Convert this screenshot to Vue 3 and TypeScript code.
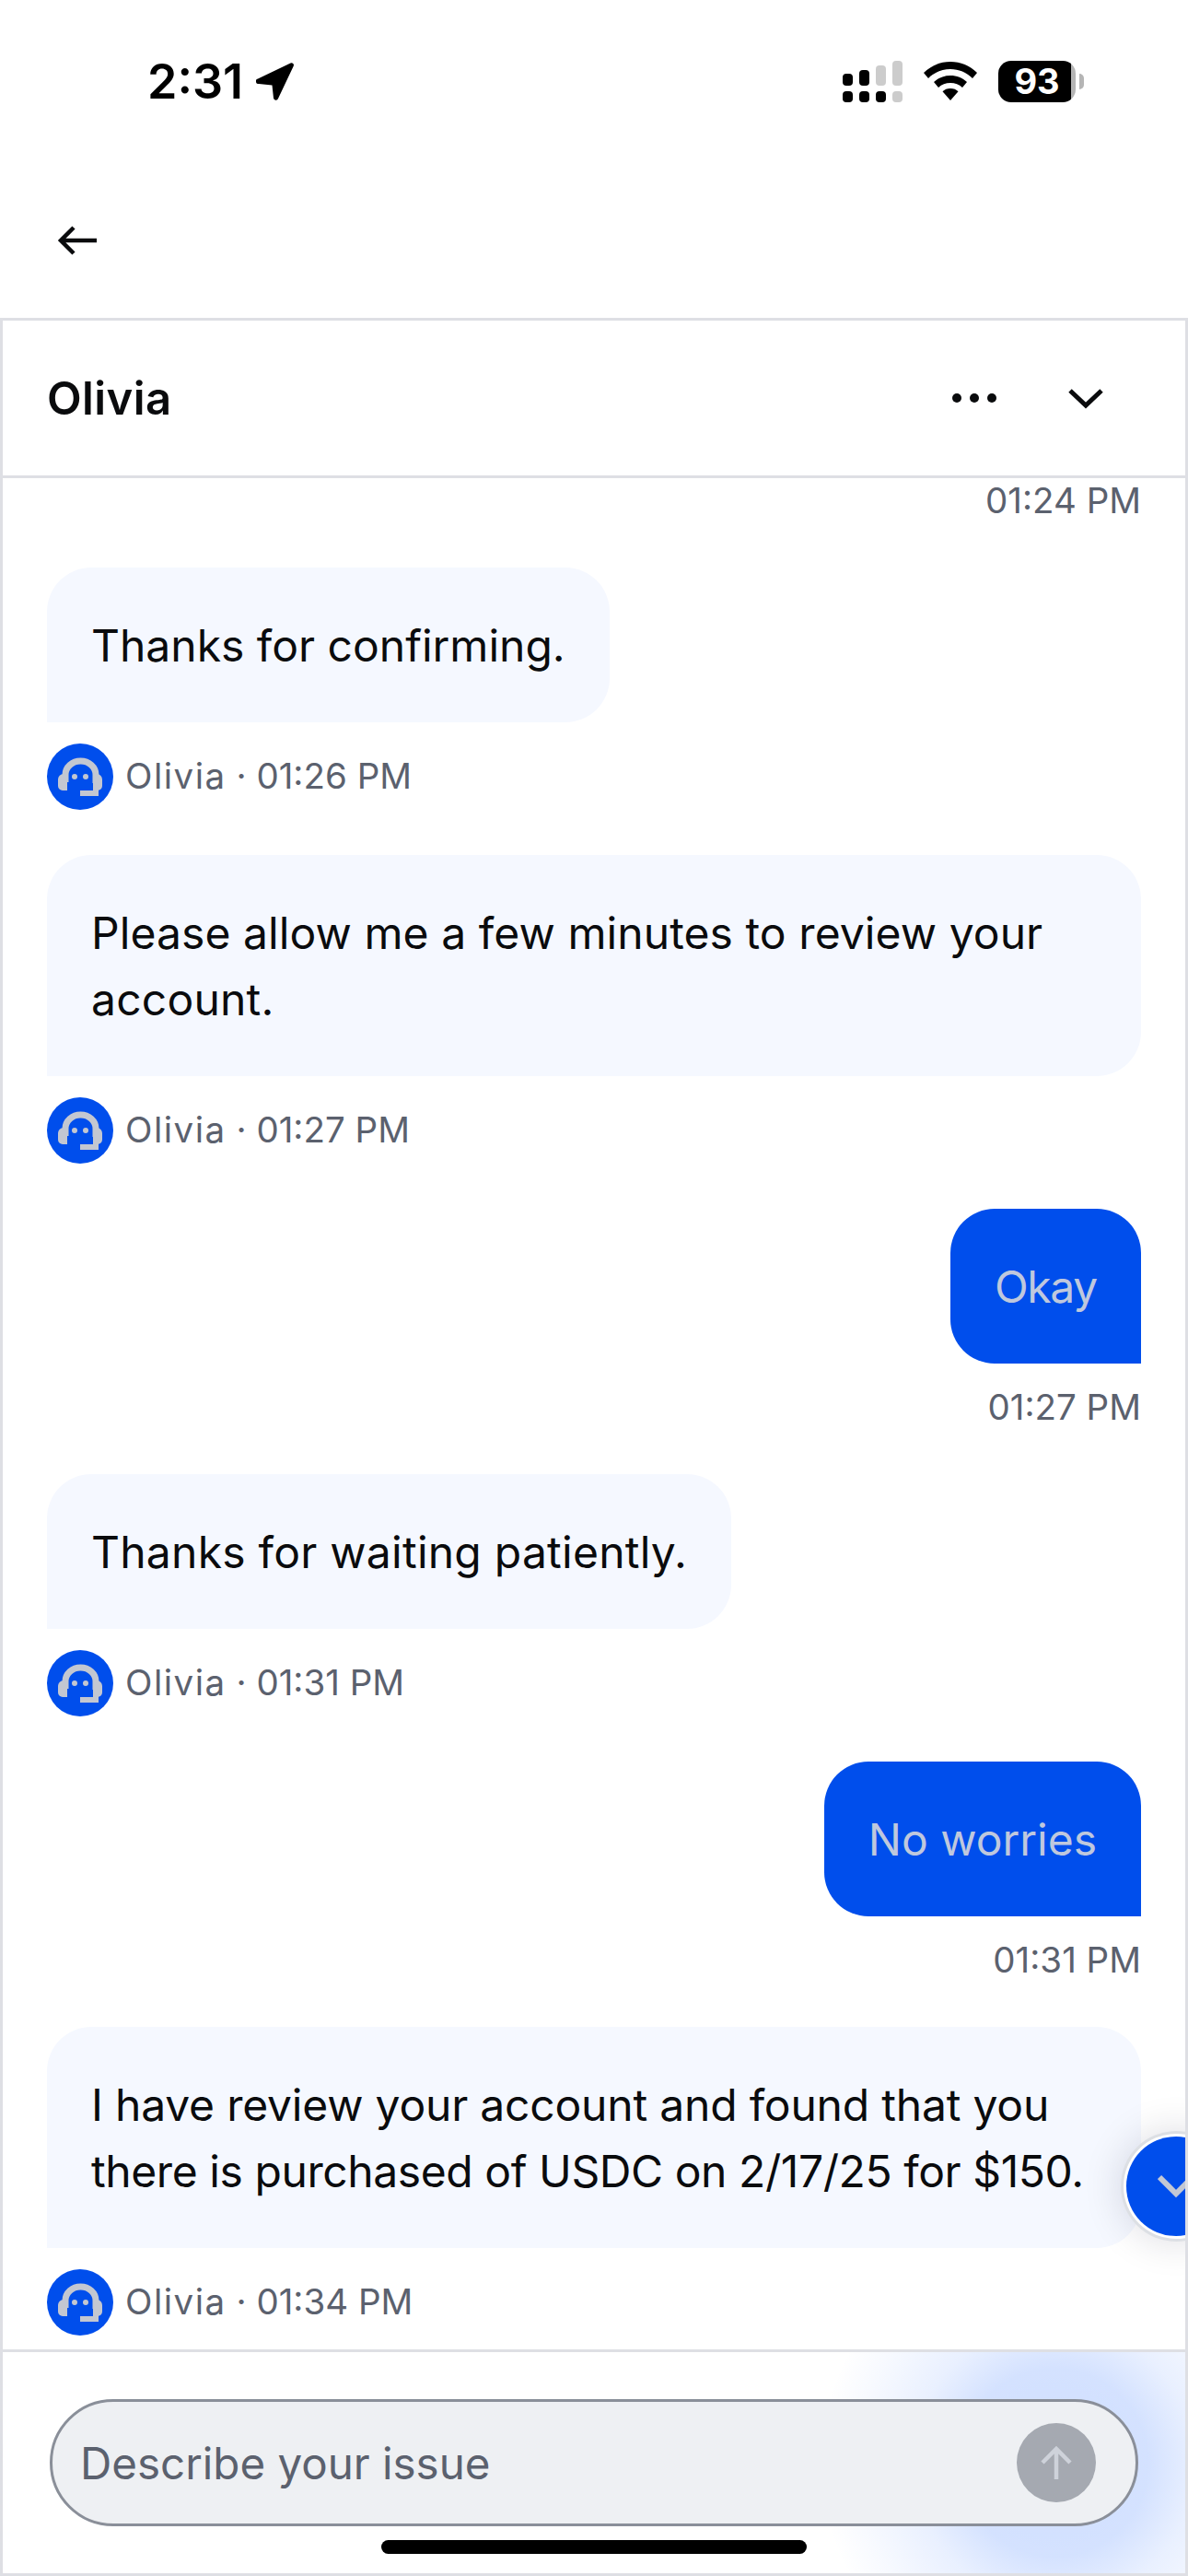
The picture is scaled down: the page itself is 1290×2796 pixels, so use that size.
<script setup lang="ts">
type Line = { text: string; track?: number }
type Message = { id: number; kind: 'agent' | 'user'; lines: Line[]; time: string }

// track = letter spacing per line, Inter runs a bit wider/narrower than the original font
const messages: Message[] = [
  { id: 1, kind: 'agent', lines: [{ text: 'Thanks for confirming.' }], time: '01:26 PM' },
  { id: 2, kind: 'agent', lines: [{ text: 'Please allow me a few minutes to review your', track: 0.08 }, { text: 'account.', track: 0.2 }], time: '01:27 PM' },
  { id: 3, kind: 'user', lines: [{ text: 'Okay', track: -1.3 }], time: '01:27 PM' },
  { id: 4, kind: 'agent', lines: [{ text: 'Thanks for waiting patiently.', track: 0.25 }], time: '01:31 PM' },
  { id: 5, kind: 'user', lines: [{ text: 'No worries' }], time: '01:31 PM' },
  { id: 6, kind: 'agent', lines: [{ text: 'I have review your account and found that you', track: -0.2 }, { text: 'there is purchased of USDC on 2/17/25 for $150.', track: -0.42 }], time: '01:34 PM' },
]
</script>

<template>
  <div class="screen">
    <header class="status-bar">
      <div class="clock">
        <span>2:31</span>
        <svg width="42" height="42" viewBox="0 0 42 42">
          <path d="M2 18.500 37.500 1.500a2.400 2.400 0 0 1 3.200 3.200L24 40a2.600 2.600 0 0 1-5-.5l-1.500-14-14.500-1.500a2.800 2.800 0 0 1-1-5.500Z" fill="#000" />
        </svg>
      </div>
      <div class="status-icons">
        <svg width="65" height="45" viewBox="0 0 65 45">
          <rect x="0" y="14" width="11" height="13" rx="4" fill="#000" />
          <rect x="18" y="10" width="11" height="17" rx="4" fill="#000" />
          <rect x="36" y="5" width="11" height="22" rx="4" fill="#ccc" />
          <rect x="54" y="0" width="11" height="27" rx="4" fill="#ccc" />
          <rect x="0" y="33" width="11" height="12" rx="4" fill="#000" />
          <rect x="18" y="33" width="11" height="12" rx="4" fill="#000" />
          <rect x="36" y="33" width="11" height="12" rx="4" fill="#000" />
          <rect x="54" y="33" width="11" height="12" rx="4" fill="#ccc" />
        </svg>
        <svg width="58" height="42" viewBox="0 0 58 42">
          <path d="M29 0C18 0 8 4 0 12l5 6c6.500-6.500 15-10 24-10s17.500 3.500 24 10l5-6C50 4 40 0 29 0Z" fill="#000" />
          <path d="M29 15c-7 0-13 2.500-18 7l5 6c3.500-3.300 8-5 13-5s9.500 1.700 13 5l5-6c-5-4.500-11-7-18-7Z" fill="#000" />
          <path d="M29 29c-3.500 0-6.500 1.200-8.500 3.300L29 42l8.500-9.700C35.500 30.200 32.500 29 29 29Z" fill="#000" />
        </svg>
        <div class="battery">93</div>
      </div>
    </header>

    <nav class="top-nav">
      <svg width="44" height="32" viewBox="0 0 44 32" fill="none" stroke="#0a0b0d" stroke-width="4.500">
        <path d="M43 16H4M18 2 4 16l14 14" />
      </svg>
    </nav>

    <section class="chat-card">
      <div class="chat-header">
        <span class="agent-name">Olivia</span>
        <div class="header-actions">
          <svg width="48" height="10" viewBox="0 0 48 10" fill="#0a0b0d">
            <circle cx="5" cy="5" r="5" />
            <circle cx="24" cy="5" r="5" />
            <circle cx="43" cy="5" r="5" />
          </svg>
          <svg width="38" height="23" viewBox="0 0 38 23" fill="none" stroke="#0a0b0d" stroke-width="5">
            <path d="M2 3l17 16L36 3" />
          </svg>
        </div>
      </div>

      <div class="messages">
        <div class="time-row">01:24 PM</div>
        <div v-for="msg in messages" :key="msg.id" class="message" :class="msg.kind">
          <div class="bubble" :class="{ wide: msg.lines.length > 1 }">
            <div
              v-for="line in msg.lines"
              :key="line.text"
              :style="{ letterSpacing: (line.track ?? 0) + 'px' }"
            >{{ line.text }}</div>
          </div>
          <div v-if="msg.kind === 'agent'" class="meta">
            <svg class="avatar" width="72" height="72" viewBox="0 0 72 72">
              <circle cx="36" cy="36" r="36" fill="#004eec" />
              <path d="M20 42V34a16.500 15 0 0 1 33 0v9" fill="none" stroke="#c3c7d1" stroke-width="7" />
              <path d="M22 33v18h-5a5 5 0 0 1-5-5v-7a6 6 0 0 1 6-6ZM50 33v18h5a5 5 0 0 0 5-5v-7a6 6 0 0 0-6-6Z" fill="#c3c7d1" />
              <path d="M50 48h6v9H36v-6h14Z" fill="#c3c7d1" />
              <circle cx="30" cy="36" r="3" fill="#c3c7d1" />
              <circle cx="42" cy="36" r="3" fill="#c3c7d1" />
            </svg>
            <span class="meta-text"><span class="meta-name">Olivia</span> · {{ msg.time }}</span>
          </div>
          <div v-else class="time-row">{{ msg.time }}</div>
        </div>

        <button class="scroll-btn">
          <svg width="40" height="26" viewBox="0 0 40 26" fill="none" stroke="#c3c8d4" stroke-width="6">
            <path d="M2 3l18 18L38 3" />
          </svg>
        </button>
      </div>

      <div class="composer">
        <div class="input-pill">
          <span class="placeholder">Describe your issue</span>
          <div class="send-btn">
            <svg width="34" height="38" viewBox="0 0 34 38" fill="none" stroke="#ced2da" stroke-width="4.500">
              <path d="M17 37V4M2 19 17 4l15 15" />
            </svg>
          </div>
        </div>
        <div class="home-indicator"></div>
      </div>
    </section>
  </div>
</template>

<style>
html,
body {
  margin: 0;
  background: #fff;
}
</style>

<style scoped>
.screen {
  width: 1290px;
  height: 2796px;
  display: flex;
  flex-direction: column;
  background: #fff;
  color: #0a0b0d;
  font-family: Inter, "Liberation Sans", sans-serif;
  overflow: hidden;
}

.status-bar {
  height: 176px;
  flex: none;
  display: flex;
  align-items: center;
  justify-content: space-between;
  padding: 0 122px 0 160px;
  box-sizing: border-box;
}

.clock {
  display: flex;
  align-items: center;
  gap: 14px;
  font-size: 52px;
  font-weight: 600;
  color: #000;
}

.status-icons {
  display: flex;
  align-items: center;
  gap: 23px;
}

.battery {
  position: relative;
  width: 84px;
  height: 45px;
  border-radius: 14px;
  background: linear-gradient(to right, #000 94%, #b5b5b5 94%);
  color: #fff;
  font-size: 38px;
  font-weight: 700;
  line-height: 45px;
  text-align: center;
}

.battery::after {
  content: "";
  position: absolute;
  left: 88px;
  top: 14px;
  width: 5px;
  height: 17px;
  border-radius: 0 6px 6px 0;
  background: #b5b5b5;
}

.top-nav {
  height: 169px;
  flex: none;
  display: flex;
  align-items: center;
  padding-left: 62px;
  box-sizing: border-box;
}

.chat-card {
  flex: 1;
  min-height: 0;
  display: flex;
  flex-direction: column;
  border: 3px solid #dedfe4;
  overflow: hidden;
}

.chat-header {
  height: 168px;
  flex: none;
  display: flex;
  align-items: center;
  justify-content: space-between;
  padding: 0 89px 0 48px;
  border-bottom: 3px solid #dedfe4;
}

.agent-name {
  font-size: 49px;
  font-weight: 600;
  letter-spacing: 0.4px;
}

.header-actions {
  display: flex;
  align-items: center;
  gap: 78px;
}

.messages {
  position: relative;
  flex: 1;
  min-height: 0;
  padding: 0 48px;
  overflow: hidden;
  display: flex;
  flex-direction: column;
  gap: 49px;
}

.message {
  display: flex;
  flex-direction: column;
  gap: 23px;
}

.message.user {
  align-items: flex-end;
}

.message.agent {
  align-items: flex-start;
}

.bubble {
  padding: 49px 48px 47px;
  border-radius: 48px;
  font-size: 48px;
  line-height: 72px;
  white-space: nowrap;
}

.bubble.wide {
  align-self: stretch;
}

.agent .bubble {
  background: #f5f8ff;
  border-bottom-left-radius: 0;
}

.user .bubble {
  background: #004eec;
  color: #bfc8dd;
  border-bottom-right-radius: 0;
}

.meta {
  display: flex;
  align-items: center;
  gap: 13px;
  height: 72px;
  font-size: 38.500px;
  color: #5b616e;
}

.meta-text {
  margin-top: -3px;
}

.meta-name {
  letter-spacing: 1.500px;
}

.avatar {
  flex: none;
}

.time-row {
  height: 48px;
  line-height: 48px;
  font-size: 38.500px;
  color: #5b616e;
  text-align: right;
  align-self: flex-end;
}

.scroll-btn {
  position: absolute;
  left: 1220px;
  top: 1800px;
  width: 108px;
  height: 108px;
  padding: 0;
  border: none;
  border-radius: 50%;
  background: #004eec;
  box-shadow: 0 0 0 3px #fff, 0 0 0 6px #dcdfe4, 0 0 44px 6px rgba(10, 11, 40, 0.14);
  display: flex;
  align-items: center;
  justify-content: center;
}

.composer {
  position: relative;
  height: 240px;
  flex: none;
  border-top: 3px solid #dedfe4;
  padding: 0 51px;
  display: flex;
  flex-direction: column;
  background: radial-gradient(circle 255px at 1142px 120px, rgba(0, 82, 255, 0.19) 0%, rgba(0, 82, 255, 0.17) 40%, rgba(0, 82, 255, 0.085) 60%, rgba(0, 82, 255, 0.03) 84%, rgba(0, 82, 255, 0) 100%);
}

.input-pill {
  margin-top: 51px;
  height: 132px;
  flex: none;
  display: flex;
  align-items: center;
  justify-content: space-between;
  padding: 0 43px 0 30px;
  border: 3px solid #8a8f99;
  border-radius: 69px;
  background: #eef0f3;
}

.placeholder {
  font-size: 47.500px;
  color: #5b616e;
}

.send-btn {
  width: 86px;
  height: 86px;
  border-radius: 50%;
  background: #a5a9b1;
  display: flex;
  align-items: center;
  justify-content: center;
}

.home-indicator {
  position: absolute;
  left: 411px;
  top: 204px;
  width: 462px;
  height: 15px;
  border-radius: 8px;
  background: #000;
}
</style>
